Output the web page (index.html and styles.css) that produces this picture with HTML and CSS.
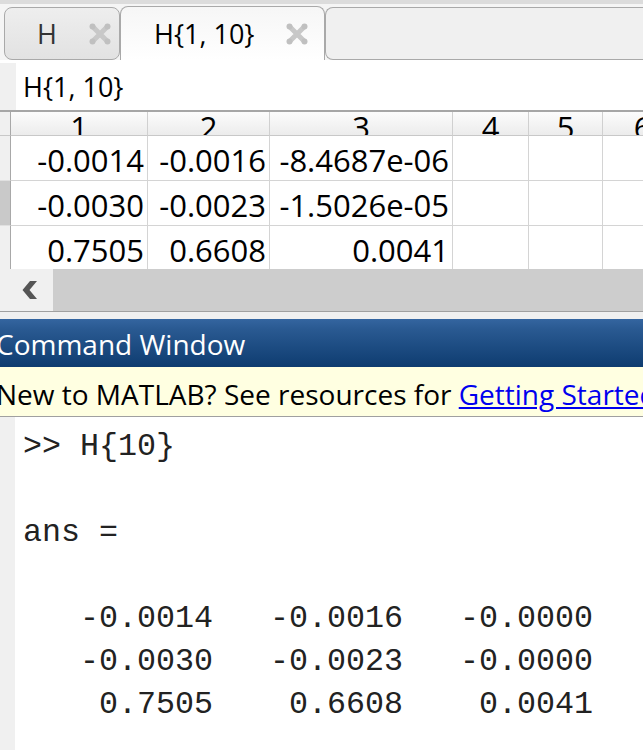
FILE: index.html
```html
<!DOCTYPE html>
<html>
<head>
<meta charset="utf-8">
<title>MATLAB Variables</title>
<link rel="stylesheet" href="styles.css">
</head>
<body>
<div class="app">
  <div class="tabbar">
    <div class="tab tab-inactive">
      <span class="tab-label">H</span>
      <svg class="close" viewBox="0 0 24 24" width="24" height="24"><path d="M5 5L19 19M19 5L5 19" stroke="#c8c8c8" stroke-width="5" stroke-linecap="round"/><circle cx="4.5" cy="4.5" r="3" fill="#c0c0c0"/><circle cx="19.5" cy="4.5" r="3" fill="#c0c0c0"/><circle cx="4.5" cy="19.5" r="3" fill="#c0c0c0"/><circle cx="19.5" cy="19.5" r="3" fill="#c0c0c0"/></svg>
    </div>
    <div class="tab tab-active">
      <span class="tab-label">H{1, 10}</span>
      <svg class="close" viewBox="0 0 24 24" width="24" height="24"><path d="M5 5L19 19M19 5L5 19" stroke="#c8c8c8" stroke-width="5" stroke-linecap="round"/><circle cx="4.5" cy="4.5" r="3" fill="#c0c0c0"/><circle cx="19.5" cy="4.5" r="3" fill="#c0c0c0"/><circle cx="4.5" cy="19.5" r="3" fill="#c0c0c0"/><circle cx="19.5" cy="19.5" r="3" fill="#c0c0c0"/></svg>
    </div>
    <div class="tab-fill"></div>
  </div>

  <div class="namebar">
    <div class="name-gutter"></div>
    <div class="name-text">H{1, 10}</div>
  </div>

  <div class="grid-wrap">
    <table class="grid">
      <colgroup>
        <col class="c-rh"><col class="c1"><col class="c2"><col class="c3"><col class="c4"><col class="c5"><col class="c6">
      </colgroup>
      <thead>
        <tr>
          <th class="rh"></th>
          <th><div class="hd">1</div></th>
          <th><div class="hd">2</div></th>
          <th><div class="hd">3</div></th>
          <th><div class="hd">4</div></th>
          <th><div class="hd">5</div></th>
          <th><div class="hd">6</div></th>
        </tr>
      </thead>
      <tbody>
        <tr>
          <td class="rh"></td><td>-0.0014</td><td>-0.0016</td><td>-8.4687e-06</td><td></td><td></td><td></td>
        </tr>
        <tr>
          <td class="rh rh-sel"></td><td>-0.0030</td><td>-0.0023</td><td>-1.5026e-05</td><td></td><td></td><td></td>
        </tr>
        <tr class="last">
          <td class="rh"></td><td>0.7505</td><td>0.6608</td><td>0.0041</td><td></td><td></td><td></td>
        </tr>
      </tbody>
    </table>
  </div>

  <div class="hscroll">
    <div class="hscroll-btn">
      <svg width="18" height="20" viewBox="0 0 18 20"><path d="M9 1L16 1L8.5 10L16 19L9 19L1.5 10Z" fill="#555555"/></svg>
    </div>
    <div class="hscroll-track"></div>
  </div>
  <div class="sep"></div>

  <div class="cw-title">Command Window</div>
  <div class="cw-notice">New to MATLAB? See resources for <a class="link" href="#">Getting Started</a>.</div>

  <div class="cw-body">
    <div class="gutter"></div>
<pre class="cw-text">&gt;&gt; H{10}

ans =

   -0.0014   -0.0016   -0.0000
   -0.0030   -0.0023   -0.0000
    0.7505    0.6608    0.0041
</pre>
  </div>
</div>
</body>
</html>
```
FILE: styles.css
```css
* { box-sizing: border-box; }
html, body { margin: 0; padding: 0; }
body {
  width: 643px;
  height: 751px;
  overflow: hidden;
  background: #fff;
  font-family: "Open Sans", "Liberation Sans", sans-serif;
  color: #000;
}
.app { width: 643px; height: 751px; overflow: hidden; }

/* Tabs */
.tabbar {
  display: flex;
  align-items: flex-end;
  height: 60px;
  border-top: 4px solid #dcdcdc;
  background: #f5f5f5;
}
.tab {
  display: flex;
  align-items: center;
  gap: 31px;
  font-size: 27px;
  white-space: nowrap;
}
.tab-inactive {
  width: 116px;
  height: 53px;
  margin-left: 4px;
  padding-left: 32px;
  background: linear-gradient(#eeeeee, #e2e2e2);
  border: 1px solid #a9a9a9;
  border-radius: 8px;
  color: #333;
}
.tab-active {
  width: 205px;
  height: 54px;
  padding-left: 33px;
  background: linear-gradient(#f6f6f6, #ffffff);
  border: 1px solid #a9a9a9;
  border-bottom: none;
  border-radius: 8px 8px 0 0;
  color: #000;
}
.tab-fill {
  flex: 1;
  height: 53px;
  background: #f0f0f0;
  border: 1px solid #a9a9a9;
  border-right: none;
  border-radius: 8px 0 0 8px;
}
.close { flex: none; }

/* Name bar */
.namebar {
  display: flex;
  height: 50px;
  background: #fff;
}
.name-gutter {
  width: 16px;
  margin-top: 3px;
  background: #f0f0f0;
}
.name-text {
  padding-left: 7px;
  padding-top: 3px;
  font-size: 27px;
  line-height: 48px;
}

/* Grid */
.grid-wrap {
  width: 643px;
  overflow: hidden;
  border-top: 2px solid #a6a6a6;
}
.grid {
  table-layout: fixed;
  width: 683px;
  border-collapse: separate;
  border-spacing: 0;
  font-size: 31px;
}
.c-rh { width: 11px; }
.c1 { width: 137px; }
.c2 { width: 122px; }
.c3 { width: 183px; }
.c4 { width: 76px; }
.c5 { width: 74px; }
.c6 { width: 80px; }
.grid th {
  padding: 0;
  font-weight: normal;
  background: linear-gradient(#fcfcfc, #ececec);
  border-right: 1px solid #d0d0d0;
  border-bottom: 1px solid #c8c8c8;
}
.grid th.rh { background: #f0f0f0; border-right: 1px solid #a8a8a8; }
.hd {
  height: 23px;
  overflow: hidden;
  line-height: 30px;
  text-align: center;
}
.grid td {
  height: 45px;
  padding: 5px 3px 0 0;
  text-align: right;
  vertical-align: middle;
  line-height: 1;
  white-space: nowrap;
  border-right: 1px solid #d4d4d4;
  border-bottom: 1px solid #d4d4d4;
}
.grid tr.last td { border-bottom: none; height: 43px; }
.grid td.rh {
  background: #f0f0f0;
  border-right: 1px solid #a8a8a8;
  border-bottom: 1px solid #e0e0e0;
}
.grid td.rh-sel { background: #c9c9c9; }

/* Horizontal scrollbar */
.hscroll {
  display: flex;
  height: 42px;
}
.hscroll-btn {
  width: 53px;
  background: #f0f0f0;
  display: flex;
  align-items: center;
  justify-content: flex-start;
  padding-left: 21px;
}
.hscroll-track {
  flex: 1;
  background: #cdcdcd;
}
.sep {
  height: 8px;
  border-top: 1px solid #a0a0a0;
  background: #f0f0f0;
}

/* Command window */
.cw-title {
  height: 48px;
  background: linear-gradient(#3465a0, #2a5a92 20%, #0e3c70);
  color: #fff;
  font-size: 28px;
  line-height: 50px;
  text-indent: -4px;
  white-space: nowrap;
  overflow: hidden;
}
.cw-notice {
  height: 50px;
  background: #ffffe1;
  border-bottom: 1px solid #a0a0a0;
  font-size: 28px;
  line-height: 54px;
  text-indent: -4px;
  white-space: nowrap;
  overflow: hidden;
}
.link { color: #0000ee; text-decoration: underline; }

.cw-body {
  display: flex;
  height: 333px;
}
.gutter {
  width: 15px;
  flex: none;
  background: #f0f0f0;
}
.cw-text {
  margin: 0;
  padding: 9px 0 0 8px;
  font-family: "Liberation Mono", "DejaVu Sans Mono", monospace;
  font-size: 31.67px;
  line-height: 43px;
  color: #222;
}
```
